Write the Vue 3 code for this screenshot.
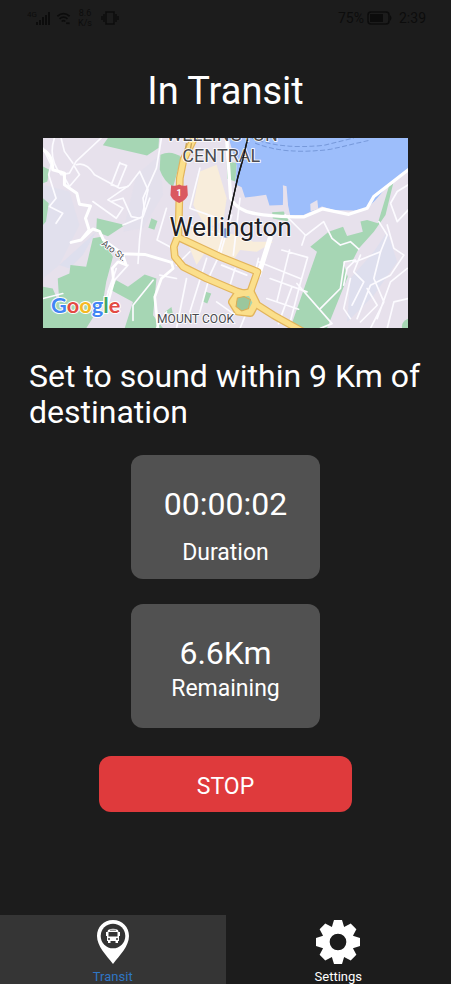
<script setup>
import { ref } from 'vue'

const duration = ref('00:00:02')
const remaining = ref('6.6Km')
const alarmRadius = ref(9)
const teeth = [0, 45, 90, 135, 180, 225, 270, 315]
</script>

<template>
  <div class="screen">
    <header class="status">
      <div class="status-group">
        <svg class="signal" viewBox="0 0 24 16" aria-hidden="true">
          <text x="0" y="7" font-size="8">4G</text>
          <path d="M9 15v-3h2v3zM12 15v-5h2v5zM15 15V7h2v8zM18 15V5h2v10zM21 15V2h2v13z" />
        </svg>
        <svg class="wifi" viewBox="0 0 16 16" aria-hidden="true">
          <path d="M1 6q7-6 14 0M3.500 9q4.500-4 9 0M6 12q2-2 4 0" fill="none" stroke="currentColor" stroke-width="2" />
          <path d="M11 13h4v2h-4z" />
        </svg>
        <span class="rate"><span>8.6</span><span>K/s</span></span>
        <svg class="vibrate" viewBox="0 0 18 16" aria-hidden="true">
          <path d="M5 2h8v12H5zM3 4v8M15 4v8M1 6v4M17 6v4" fill="none" stroke="currentColor" stroke-width="1.500" />
        </svg>
      </div>
      <div class="status-group status-right">
        <span>75%</span>
        <svg class="battery" viewBox="0 0 26 14" aria-hidden="true">
          <rect x="1" y="1" width="21" height="12" rx="3" fill="none" stroke="currentColor" stroke-width="1.500" />
          <path d="M3 3h13v8H3zM23 4q3 3 0 6z" />
        </svg>
        <span class="clock">2:39</span>
      </div>
    </header>

    <main class="content">
      <h1>In Transit</h1>

      <svg class="map" viewBox="11 10 1092 569" role="img" aria-label="Map of Wellington">
        <rect x="11" y="10" width="1092" height="569" fill="#e7e1ec" />
        <g fill="#dedfee">
          <path d="M11 150L90 170 120 270 60 390 11 430z" opacity="0.600" />
          <path d="M290 120L360 60 370 180 310 280 250 290z" opacity="0.400" />
          <path d="M60 390L170 290 130 360 90 400z" />
          <path d="M930 430L1000 350 1040 290 1070 380 1000 480 920 560z" />
        </g>
        <g fill="#f8eddb">
          <path d="M480 110L530 90 560 190 550 260 500 280 460 210z" />
          <path d="M430 290L500 270 640 320 700 320 650 350 600 345 580 375 500 345 470 390z" />
        </g>

        <g fill="#a6d6b4">
          <path d="M205 10H358L356 40 322 62 190 32z" />
          <path d="M362 60Q395 45 425 68L400 156Q372 140 360 105z" />
          <path d="M11 95L30 105 24 140 11 145zM11 190L28 205 20 260 11 270z" />
          <path d="M172 250L256 270 205 304 170 290z" />
          <path d="M335 250L353 258 344 284 326 278z" />
          <path d="M160 310L185 305 220 365 200 440 190 500 140 579H65L55 430 90 415 93 390 140 395z" />
          <path d="M11 455L40 460 70 530 70 579H11z" />
          <path d="M230 435L265 455 315 418 350 430 340 540 370 579H255L280 500 215 465z" />
          <path d="M497 470L514 475 502 505 488 499zM375 530L395 515 400 540z" />
          <path d="M560 80L590 85 586 140 562 132z" />
          <path d="M696 232L730 230 748 243 742 259 698 251z" />
          <path d="M865 290L908 275 920 303 967 290 960 260 980 255 1012 265 1045 155 1058 145 1035 240 1000 290 955 340 935 380 908 380 922 425 860 579H750L830 350 810 335z" />
          <path d="M1103 550Q1080 560 1085 579H1103z" />
        </g>

        <path d="M566 10H1103V105L1040 155 1005 195 980 220 940 227 880 225 845 215 790 240 750 241 730 155 728 210 688 212 678 180 615 188 605 157 586 148 590 92z" fill="#9dbefb" />
        <path d="M728 151L739 154 746 241 733 243zM810 207L831 195 834 222 811 229z" fill="#e7e1ec" />
        <path d="M635 10Q720 45 850 32L940 10M645 25Q730 61 870 44L990 16" fill="none" stroke="#7799da" stroke-width="3" stroke-dasharray="15 7" />

        <g class="streets" stroke="#fcfbff" stroke-width="5">
          <path d="M45 10Q25 70 65 120L90 115 110 80 185 10M65 10L75 50 100 85" />
          <path d="M110 90Q140 80 165 120L240 160 265 155M240 85L261 92 235 155 215 150 241 83" />
          <path d="M105 95L120 120 90 155 65 110M300 110L325 165 310 230 300 310 295 385M300 110L270 150 205 195 250 220 230 250 160 200" />
          <path d="M11 40L35 90 28 120 50 190 30 215 70 235 50 265M215 200L250 190 275 245 300 250" />
          <path d="M365 10L350 100 310 190 315 230M250 270L310 245 330 190" />
          <path d="M380 220L352 315 400 340M450 350L410 390M500 370L450 530M545 345L510 420 480 530M440 430L410 579" />
          <path d="M450 270L550 300 530 370M480 100L450 220 520 245M575 240L540 360M600 190L580 360" />
          <path d="M280 555L280 510 340 435M220 440L265 390M205 470L230 400 200 490M350 579L380 530M11 490L70 475" />
          <path d="M655 380L780 430M725 345L802 367 780 445 745 579M748 345L710 500M690 430L800 470M655 370L620 520M680 490L775 522M755 455L715 565" />
          <path d="M735 240L795 300 785 330M798 300L850 260 875 310 900 330 930 320 955 342M770 445L875 565 840 579" />
          <path d="M840 520L900 460 912 380 945 375 920 400 910 450M945 380L1020 350 1040 300 1015 260M930 430L910 520 930 550M960 360L940 410 970 440 935 510M1103 225L1070 260 1050 205 1070 170 1103 150" />
          <path d="M1040 270L1060 340 1090 360 1050 420 990 450 950 550M1020 350L1000 430 1030 500 990 579M1100 400L1050 440 1010 550M1103 490L1060 500 1040 579M980 460L1010 510 960 560" />
          <path d="M545 390L620 420M570 450L585 400M600 579L620 530M530 500L580 535M360 420L410 430" />
        </g>

        <g class="streets" stroke="#fff">
          <path d="M11 45Q40 60 40 105L75 115 75 150 112 175 120 208 153 213 138 250 149 285 125 315 95 322M125 315L160 282 180 289 192 315 248 356 315 358 395 382" stroke-width="9" />
          <path d="M248 356L260 390 235 380 218 400 222 440 200 520M395 382L400 400 365 430 345 485 355 579" stroke-width="8" />
          <path d="M560 10L572 190Q590 225 640 235T790 246L846 222 925 238 980 220 1000 185 1103 105" stroke-width="10" />
          <path d="M690 310L655 420" stroke-width="15" />
        </g>

        <g class="streets" stroke="#e2b45c" stroke-width="23">
          <path d="M463 10L431 75 420 130 416 300 402 335 405 365 430 395 500 430 590 468 612 475" />
          <path d="M418 308L540 365 652 410 628 478 645 505 700 540 790 590" />
        </g>
        <path d="M592 478L632 472 647 502 631 532 594 528 577 500z" fill="#a6d6b4" stroke="#e2b45c" stroke-width="26" stroke-linejoin="round" />
        <g class="streets" stroke="#fbdf8b" stroke-width="16">
          <path d="M463 10L431 75 420 130 416 300 402 335 405 365 430 395 500 430 590 468 612 475" />
          <path d="M418 308L540 365 652 410 628 478 645 505 700 540 790 590" />
        </g>
        <path d="M592 478L632 472 647 502 631 532 594 528 577 500z" fill="#a6d6b4" stroke="#fbdf8b" stroke-width="18" stroke-linejoin="round" />
        <path d="M592 488L612 484 631 493 625 520 605 527 588 514z" fill="#9bc79d" stroke="#dcac54" stroke-width="3" />
        <path d="M440 25L435 52M455 25L450 52" stroke="#c9a356" stroke-width="4" />

        <path d="M394 151Q406 156 418 149 430 156 442 151L444 181Q437 197 418 204 399 197 392 181z" fill="#da5960" />
        <text x="418" y="184" text-anchor="middle" font-size="27" font-weight="700" fill="#fff">1</text>

        <circle cx="557" cy="294" r="14" fill="#718fcc" />
        <path d="M622 15L608 75 594 125 565 255" fill="none" stroke="#171717" stroke-width="4" />

        <g class="labels">
          <text x="546" y="19" text-anchor="middle" font-size="54">WELLINGTON</text>
          <text x="544" y="81" text-anchor="middle" font-size="54">CENTRAL</text>
          <text x="572" y="304" text-anchor="middle" font-size="78" class="city">Wellington</text>
          <text x="467" y="563" text-anchor="middle" font-size="36">MOUNT COOK</text>
          <text x="184" y="329" font-size="28" transform="rotate(37 184 329)">Aro St.</text>
        </g>
        <path d="M622 15L608 75 594 125 565 255" fill="none" stroke="#171717" stroke-width="4" />
        <text class="brand" x="35" y="533" font-size="65"><tspan fill="#4285f4">G</tspan><tspan fill="#e34a43">o</tspan><tspan fill="#f5b923">o</tspan><tspan fill="#4285f4">g</tspan><tspan fill="#42a563">l</tspan><tspan fill="#e34a43">e</tspan></text>
      </svg>

      <p class="notice">Set to sound within {{ alarmRadius }} Km of destination</p>

      <section class="card card-duration">
        <strong>{{ duration }}</strong>
        <span>Duration</span>
      </section>
      <section class="card card-remaining">
        <strong>{{ remaining }}</strong>
        <span>Remaining</span>
      </section>

      <button class="stop" type="button">STOP</button>
    </main>

    <nav class="tabs">
      <a class="tab active" href="#transit" aria-current="page">
        <svg viewBox="0 0 46 46" aria-hidden="true">
          <path d="M23 1C13.500 1 7 8 7 17c0 10 9 19 16 28 7-9 16-18 16-28C39 8 32.500 1 23 1z" fill="#fff" />
          <circle cx="23" cy="17" r="12.300" fill="#333" />
          <path d="M18 11Q23 8.500 28 11L28.500 13H30V17H29V22H28V24H25.500V22H20.500V24H18V22H17V17H16V13H17.500z" fill="#fff" />
          <path d="M18.500 13H27.500V17.500H18.500zM20 10.800H26V11.600H20z" fill="#333" />
          <circle cx="19" cy="20" r="1" fill="#333" /><circle cx="27" cy="20" r="1" fill="#333" />
        </svg>
        <span>Transit</span>
      </a>
      <a class="tab" href="#settings">
        <svg viewBox="-69 -69 138 138" aria-hidden="true">
          <path v-for="angle in teeth" :key="angle" d="M-12-66H12L20-40H-20z" :transform="`rotate(${angle})`" fill="#fff" />
          <circle r="37" fill="none" stroke="#fff" stroke-width="24" />
        </svg>
        <span>Settings</span>
      </a>
    </nav>
  </div>
</template>

<style>
body { margin: 0; background: #1c1c1c; }
</style>

<style scoped>
.screen {
  min-height: 100vh;
  display: flex;
  flex-direction: column;
  background: #1c1c1c;
  color: #fff;
  font-family: Roboto, "Noto Sans", sans-serif;
  overflow: hidden;
}
.status {
  height: 36px;
  box-sizing: border-box;
  padding: 0 25px 0 27px;
  display: flex;
  align-items: center;
  justify-content: space-between;
  color: #0c0c0c;
  font-size: 14px;
}
.status svg { fill: currentColor; }
.status-group { display: flex; align-items: center; gap: 5px; }
.status-right { gap: 3px; }
.clock { margin-left: 3px; }
.signal { width: 24px; height: 16px; }
.wifi { width: 15px; height: 14px; }
.rate { display: flex; flex-direction: column; align-items: center; margin: 0 4px 0 2px; font-size: 9px; line-height: 10px; }
.vibrate { width: 18px; height: 16px; }
.battery { width: 26px; height: 14px; }
.content {
  flex: 1;
  display: flex;
  flex-direction: column;
  align-items: center;
}
h1 { margin: 32px 0 24px; font-size: 38px; line-height: 46px; font-weight: 400; }
.map { display: block; width: 81%; }
.streets { fill: none; stroke-linejoin: round; stroke-linecap: round; }
.labels { fill: #4b4b50; stroke: #fff; stroke-width: 5px; paint-order: stroke; }
.labels .city { fill: #202024; }
.brand { font-family: Lato, sans-serif; font-weight: 700; stroke: #fff; stroke-width: 6px; paint-order: stroke; }
.notice {
  width: 100%;
  box-sizing: border-box;
  margin: 30px 0 25px;
  padding: 0 29px;
  font-size: 32px;
  line-height: 36px;
}
.card {
  width: 42%;
  height: 124px;
  box-sizing: border-box;
  margin-bottom: 25px;
  padding-top: 30px;
  border-radius: 12px;
  background: #515151;
  display: flex;
  flex-direction: column;
  align-items: center;
}
.card strong { font-size: 32px; line-height: 38px; font-weight: 400; }
.card span { font-size: 23px; line-height: 30px; }
.card-duration { gap: 15px; }
.card-remaining { gap: 2px; }
.stop {
  width: 56%;
  height: 56px;
  margin: 3px 0 0;
  padding: 4px 0 0;
  border: 0;
  border-radius: 12px;
  background: #df3a3c;
  color: #fff;
  font: inherit;
  font-size: 23px;
}
.tabs { display: grid; grid-template-columns: 1fr 1fr; }
.tab {
  height: 69px;
  box-sizing: border-box;
  padding-top: 4px;
  display: flex;
  flex-direction: column;
  align-items: center;
  color: #fff;
  text-decoration: none;
  font-size: 13px;
  line-height: 16px;
}
.tab svg { width: 46px; height: 46px; margin-bottom: 4px; flex: none; }
.tab.active { background: #353535; color: #2f76c4; }
</style>
